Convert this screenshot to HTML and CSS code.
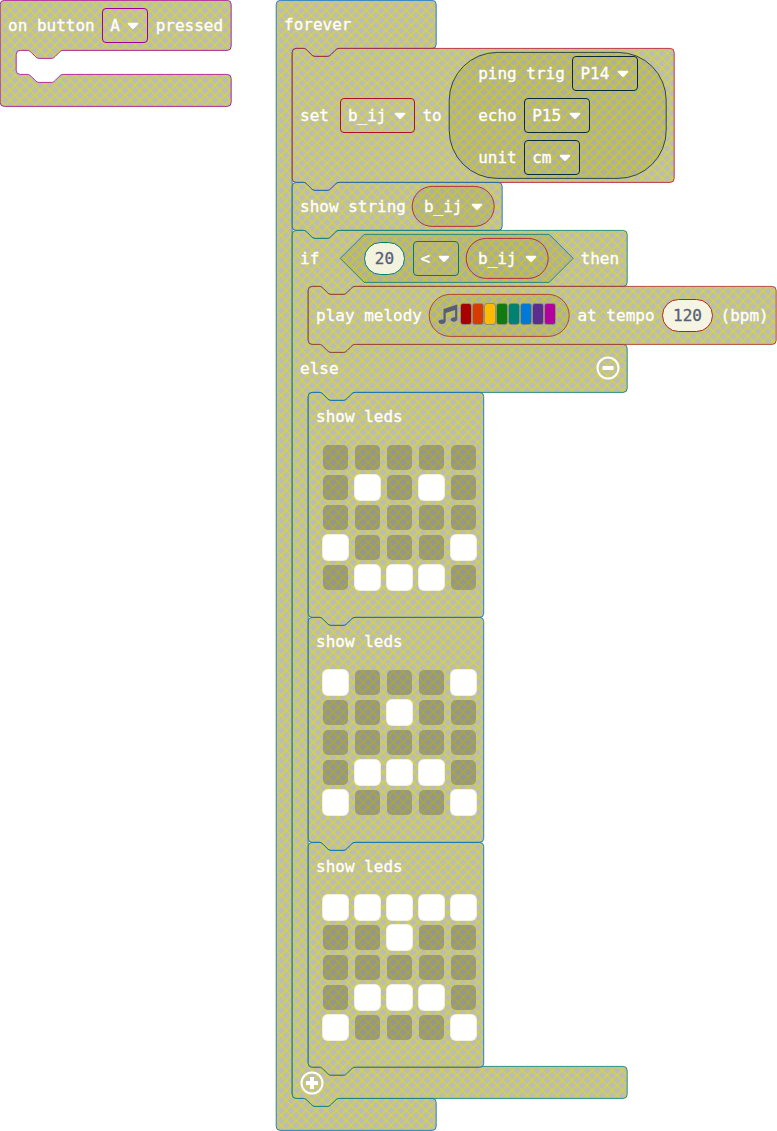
FILE: index.html
```html
<!DOCTYPE html>
<html lang="en">
<head>
<meta charset="utf-8">
<title>Blocks</title>
<link rel="stylesheet" href="styles.css">
</head>
<body>
<svg class="defs" width="0" height="0" aria-hidden="true">
  <defs>
    <pattern id="hatch" patternUnits="userSpaceOnUse" width="10" height="10">
      <rect width="10" height="10" fill="#aaa"/>
      <path d="M-1 -1l12 12M11 -1l-12 12" stroke="#cc0" stroke-width="1.350"/>
    </pattern>
    <symbol id="caret" viewBox="0 0 12 8">
      <path d="M1.6.7h8.8c.8 0 1.2.8.6 1.5L7 6.6c-.6.6-1.4.6-2 0L1 2.2C.4 1.5.8.7 1.6.7z" fill="#fff"/>
    </symbol>
  </defs>
</svg>

<main class="workspace">
  <section class="block button-event purple">
    <svg class="shape"><path d="M4 0H227a4 4 0 0 1 4 4V46a4 4 0 0 1-4 4H63c-2 0-3 1-4 2l-4 4c-1 1-2 2-4 2H39c-2 0-3-1-4-2l-4-4c-1-1-2-2-4-2H20a4 4 0 0 0-4 4V70a4 4 0 0 0 4 4h7c2 0 3 1 4 2l4 4c1 1 2 2 4 2H51c2 0 3-1 4-2l4-4c1-1 2-2 4-2H227a4 4 0 0 1 4 4V102a4 4 0 0 1-4 4H4a4 4 0 0 1-4-4V4a4 4 0 0 1 4-4z"/></svg>
    <div class="row row-button"><span>on button</span><span class="drop drop-a"><span>A</span><svg class="caret"><use href="#caret"/></svg></span><span>pressed</span></div>
  </section>

  <section class="block forever blue">
    <svg class="shape"><path d="M4 0H156a4 4 0 0 1 4 4V44a4 4 0 0 1-4 4H63c-2 0-3 1-4 2l-4 4c-1 1-2 2-4 2H39c-2 0-3-1-4-2l-4-4c-1-1-2-2-4-2H20a4 4 0 0 0-4 4V1094a4 4 0 0 0 4 4h7c2 0 3 1 4 2l4 4c1 1 2 2 4 2H51c2 0 3-1 4-2l4-4c1-1 2-2 4-2H156a4 4 0 0 1 4 4V1126a4 4 0 0 1-4 4H4a4 4 0 0 1-4-4V4a4 4 0 0 1 4-4z"/></svg>
    <div class="row row-48"><span>forever</span></div>

    <div class="stack">
      <div class="block set-block red">
        <svg class="shape"><path d="M4 0H11c2 0 3 1 4 2l4 4c1 1 2 2 4 2H35c2 0 3-1 4-2l4-4c1-1 2-2 4-2H378a4 4 0 0 1 4 4V130a4 4 0 0 1-4 4H47c-2 0-3 1-4 2l-4 4c-1 1-2 2-4 2H23c-2 0-3-1-4-2l-4-4c-1-1-2-2-4-2H4a4 4 0 0 1-4-4V4a4 4 0 0 1 4-4z"/></svg>
        <div class="row row-set">
          <span>set</span>
          <span class="drop drop-var"><span>b_ij</span><svg class="caret"><use href="#caret"/></svg></span>
          <span>to</span>
          <div class="block ping dark">
            <svg class="shape"><rect width="217" height="126" rx="48"/></svg>
            <div class="ping-row"><span>ping trig</span><span class="drop drop-pin"><span>P14</span><svg class="caret"><use href="#caret"/></svg></span></div>
            <div class="ping-row"><span>echo</span><span class="drop drop-pin"><span>P15</span><svg class="caret"><use href="#caret"/></svg></span></div>
            <div class="ping-row"><span>unit</span><span class="drop drop-unit"><span>cm</span><svg class="caret"><use href="#caret"/></svg></span></div>
          </div>
        </div>
      </div>

      <div class="block string-block blue">
        <svg class="shape"><path d="M4 0H11c2 0 3 1 4 2l4 4c1 1 2 2 4 2H35c2 0 3-1 4-2l4-4c1-1 2-2 4-2H206a4 4 0 0 1 4 4V44a4 4 0 0 1-4 4H47c-2 0-3 1-4 2l-4 4c-1 1-2 2-4 2H23c-2 0-3-1-4-2l-4-4c-1-1-2-2-4-2H4a4 4 0 0 1-4-4V4a4 4 0 0 1 4-4z"/></svg>
        <div class="row row-48 row-string"><span>show string</span>
          <span class="block variable red"><svg class="shape"><rect width="82" height="40" rx="20"/></svg><span>b_ij</span><svg class="caret"><use href="#caret"/></svg></span>
        </div>
      </div>

      <div class="block if-block teal">
        <svg class="shape"><path d="M4 0H11c2 0 3 1 4 2l4 4c1 1 2 2 4 2H35c2 0 3-1 4-2l4-4c1-1 2-2 4-2H331a4 4 0 0 1 4 4V52a4 4 0 0 1-4 4H63c-2 0-3 1-4 2l-4 4c-1 1-2 2-4 2H39c-2 0-3-1-4-2l-4-4c-1-1-2-2-4-2H20a4 4 0 0 0-4 4V110a4 4 0 0 0 4 4h7c2 0 3 1 4 2l4 4c1 1 2 2 4 2H51c2 0 3-1 4-2l4-4c1-1 2-2 4-2H331a4 4 0 0 1 4 4V158a4 4 0 0 1-4 4H63c-2 0-3 1-4 2l-4 4c-1 1-2 2-4 2H39c-2 0-3-1-4-2l-4-4c-1-1-2-2-4-2H20a4 4 0 0 0-4 4V832a4 4 0 0 0 4 4h7c2 0 3 1 4 2l4 4c1 1 2 2 4 2H51c2 0 3-1 4-2l4-4c1-1 2-2 4-2H331a4 4 0 0 1 4 4V864a4 4 0 0 1-4 4H47c-2 0-3 1-4 2l-4 4c-1 1-2 2-4 2H23c-2 0-3-1-4-2l-4-4c-1-1-2-2-4-2H4a4 4 0 0 1-4-4V4a4 4 0 0 1 4-4z"/></svg>
        <div class="row row-if">
          <span class="if-label">if</span>
          <div class="block compare teal">
            <svg class="shape"><path d="M24 0H209L233 24L209 48H24L0 24z"/></svg>
            <span class="number num-20"><span>20</span></span>
            <span class="drop drop-op"><span>&lt;</span><svg class="caret"><use href="#caret"/></svg></span>
            <span class="block variable red"><svg class="shape"><rect width="82" height="40" rx="20"/></svg><span>b_ij</span><svg class="caret"><use href="#caret"/></svg></span>
          </div>
          <span>then</span>
        </div>

        <div class="stack">
          <div class="block play-block rust">
            <svg class="shape"><path d="M4 0H11c2 0 3 1 4 2l4 4c1 1 2 2 4 2H35c2 0 3-1 4-2l4-4c1-1 2-2 4-2H464a4 4 0 0 1 4 4V54a4 4 0 0 1-4 4H47c-2 0-3 1-4 2l-4 4c-1 1-2 2-4 2H23c-2 0-3-1-4-2l-4-4c-1-1-2-2-4-2H4a4 4 0 0 1-4-4V4a4 4 0 0 1 4-4z"/></svg>
            <div class="row row-play">
              <span>play melody</span>
              <div class="block melody rust">
                <svg class="shape"><rect width="140" height="42" rx="21"/></svg>
                <svg class="note" viewBox="0 0 20 20"><path d="M5.500 5 19.300 .6V14.800c0 1.900-1.700 2.900-3.600 2.900-1.800 0-3-.9-3-2.100 0-1.700 1.900-2.600 4.400-2.400V6L7.700 9v8c0 1.900-1.800 2.900-4 2.900-2 0-3.200-.9-3.200-2.100 0-1.700 2-2.500 5-2.300z"/></svg>
                <div class="swatches"><i class="c1"></i><i class="c2"></i><i class="c3"></i><i class="c4"></i><i class="c5"></i><i class="c6"></i><i class="c7"></i><i class="c8"></i></div>
              </div>
              <span>at tempo</span>
              <span class="number num-120"><span>120</span></span>
              <span>(bpm)</span>
            </div>
          </div>
        </div>

        <div class="row row-48 row-else"><span>else</span>
          <svg class="round" viewBox="0 0 24 24"><circle cx="12" cy="12" r="10.500"/><path d="M6.500 12h11"/></svg>
        </div>

        <div class="stack">
          <div class="block led-block blue" data-leds="00000 01010 00000 10001 01110"></div>
          <div class="block led-block blue" data-leds="10001 00100 00000 01110 10001"></div>
          <div class="block led-block blue" data-leds="11111 00100 00000 01110 10001"></div>
        </div>

        <div class="row-add"><svg class="round" viewBox="0 0 24 24"><circle cx="12" cy="12" r="10.500"/><path d="M6 12h12M12 6v12"/></svg></div>
      </div>
    </div>
  </section>
</main>
<script src="leds.js"></script>
</body>
</html>
```
FILE: styles.css
```css
body { margin: 0; background: #fff; overflow: hidden; }
.defs { position: absolute; }

.workspace {
  display: flex;
  align-items: flex-start;
  gap: 44px;
  width: 777px;
  height: 1131px;
  overflow: hidden;
  color: #fff;
  font: 16px/20px "DejaVu Sans Mono", monospace;
  -webkit-text-stroke: 0.3px currentColor;
  white-space: nowrap;
}
.workspace span:not([class]) { padding-top: 2px; }

/* Blocks: an svg outline behind flowed content */
.block { position: relative; isolation: isolate; box-sizing: border-box; flex: none; }
.shape { position: absolute; z-index: -1; left: 0; top: 0; width: 100%; height: 100%; overflow: visible; }
.shape > * { fill: url(#hatch); fill-opacity: .8; stroke: var(--edge); stroke-opacity: .8; transform: translate(.2px, .4px); }
.purple { --edge: #a0008f; }
.blue { --edge: #0068bb; }
.red { --edge: #b00e2c; }
.dark { --edge: #0c2a36; }
.teal { --edge: #007c70; }
.rust { --edge: #a82a1c; }

.button-event { width: 232px; height: 107px; }
.forever { width: 160px; height: 1131px; }
.set-block { width: 382px; height: 134px; }
.string-block { width: 210px; height: 48px; }
.if-block { width: 336px; height: 868px; }
.play-block { width: 469px; height: 58px; }
.led-block { width: 176px; height: 225px; }
.stack { padding-left: 16px; display: flex; flex-direction: column; align-items: flex-start; }

.row { display: flex; align-items: center; gap: 7.5px; padding-left: 8px; box-sizing: border-box; }
.row-48 { height: 48px; }
.row-string { gap: 6px; }
.row-button { height: 50px; }
.row-set { height: 134px; }
.row-if { height: 56px; }
.row-play { height: 58px; }
.row-else { justify-content: space-between; padding-right: 8.5px; padding-bottom: 1px; }
.row-add { height: 31px; display: flex; align-items: center; padding-left: 8px; }
.set-block .drop-var { margin-left: 3.5px; }

/* Fields */
.drop {
  display: flex;
  align-items: center;
  justify-content: space-between;
  box-sizing: border-box;
  height: 35px;
  padding: 0 8px 0 7px;
  border: 1px solid var(--edge);
  border-radius: 4px;
  flex: none;
}
.caret { width: 12px; height: 8px; flex: none; margin-top: 1px; }
.drop-a { width: 46px; }
.drop-var { width: 75px; }
.drop-pin { width: 66px; }
.drop-unit { width: 56px; }
.drop-op { width: 46px; }

.variable {
  display: flex;
  align-items: center;
  justify-content: space-between;
  width: 83px;
  height: 41px;
  padding: 0 12px;
}
.ping { width: 218px; height: 127px; padding-left: 29px; }
.ping-row { display: flex; align-items: center; gap: 7.5px; height: 42px; }
.ping .drop { margin-top: 1px; }
.if-label { width: 32.5px; padding-top: 1px; }
.compare { display: flex; align-items: center; gap: 7.5px; width: 233px; height: 49px; padding-left: 24px; }
.number {
  display: flex;
  align-items: center;
  justify-content: center;
  box-sizing: border-box;
  height: 33px;
  border: 1px solid var(--edge);
  border-radius: 17px;
  background: rgba(255, 255, 245, .82);
  color: #575e75;
  flex: none;
}
.num-20 { width: 41px; }
.num-120 { width: 51px; }

.melody { display: flex; align-items: center; width: 140.5px; height: 43px; padding-left: 9px; }
.note { width: 20px; height: 20px; fill: #575e75; margin: -2px 3px 0 0; }
.swatches { display: flex; gap: 2px; margin-top: -3px; }
.swatches i { box-sizing: border-box; width: 10px; height: 20px; border-radius: 2px; box-shadow: 0 0 0 .7px rgba(87, 94, 117, .6); }
.c1 { background: #a80000; }
.c2 { background: #d83b01; }
.c3 { background: #ffb900; }
.c4 { background: #107c10; }
.c5 { background: #008272; }
.c6 { background: #0078d7; }
.c7 { background: #5c2d91; }
.c8 { background: #b4009e; }

.round { width: 24px; height: 24px; fill: none; stroke: #fff; stroke-width: 2; }
.round path { stroke-width: 4; }

.leds { display: grid; grid-template-columns: repeat(5, 25px); grid-auto-rows: 25px; column-gap: 7px; row-gap: 5px; padding: 5px 0 0 15px; }
.leds i { border-radius: 5px; background: rgba(0, 0, 0, .2); }
.leds i.on { background: #fff; box-shadow: 0 0 0 1px rgba(255, 255, 255, .75); }
```
FILE: leds.js
```js
// Fill each "show leds" block with its outline, label and 5x5 grid.
const outline = '<svg class="shape"><path d="M4 0H11c2 0 3 1 4 2l4 4c1 1 2 2 4 2H35c2 0 3-1 4-2l4-4c1-1 2-2 4-2H171.500a4 4 0 0 1 4 4V221a4 4 0 0 1-4 4H47c-2 0-3 1-4 2l-4 4c-1 1-2 2-4 2H23c-2 0-3-1-4-2l-4-4c-1-1-2-2-4-2H4a4 4 0 0 1-4-4V4a4 4 0 0 1 4-4z"/></svg>';
document.querySelectorAll('[data-leds]').forEach(block => {
  const cells = block.dataset.leds.replace(/ /g, '').split('')
    .map(v => v === '1' ? '<i class="on"></i>' : '<i></i>').join('');
  block.innerHTML = outline + '<div class="row row-48"><span>show leds</span></div><div class="leds">' + cells + '</div>';
});
```
